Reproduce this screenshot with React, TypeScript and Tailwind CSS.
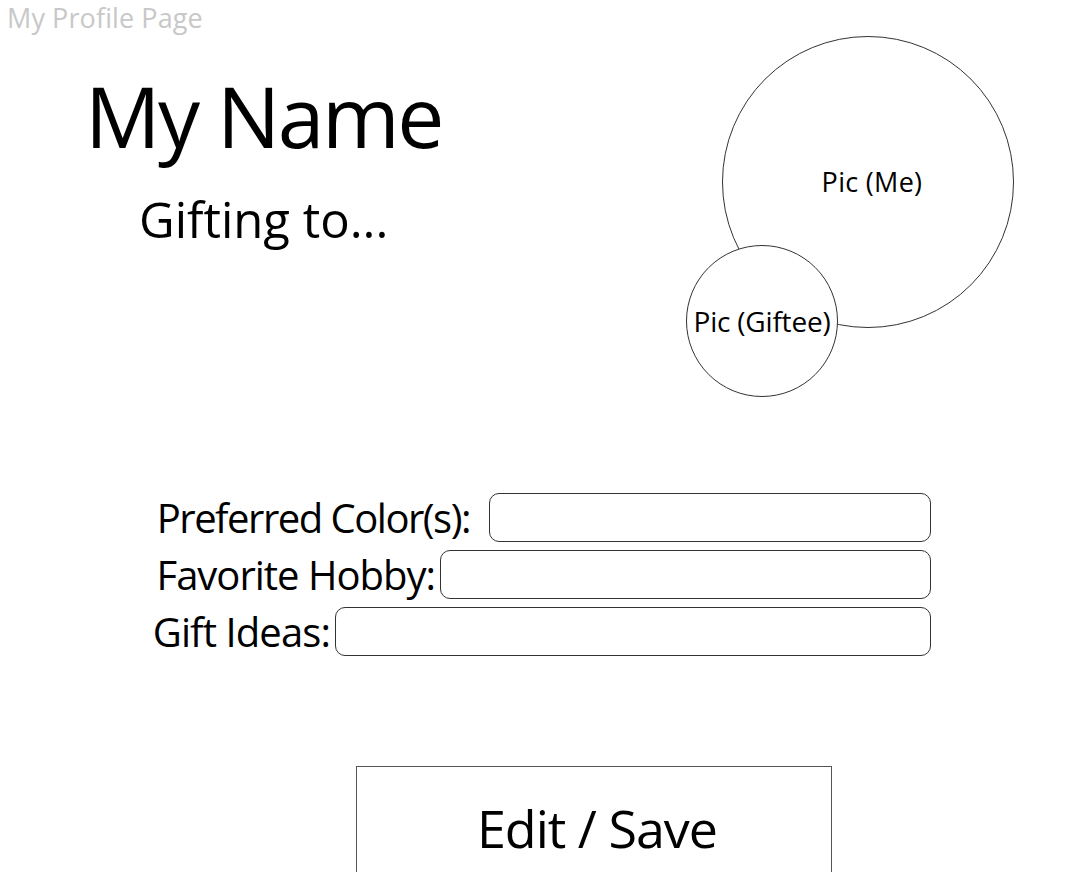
const Field = ({
  label,
  width,
  gap,
  tracking,
}: {
  label: string;
  width: string;
  gap: string;
  tracking: string;
}) => (
  <div className={`flex items-center justify-end ${gap}`}>
    <span className={`shrink-0 text-[40px] leading-none text-black ${tracking}`}>{label}</span>
    <div className={`h-[49px] ${width} rounded-[10px] border border-[#333] bg-white`} />
  </div>
);

export default function App() {
  return (
    <div
      className="relative w-[1091px] h-[872px] overflow-hidden bg-white text-black"
      style={{ fontFamily: '"Open Sans", "Noto Sans", sans-serif' }}
    >
      <div className="h-[36px] pl-[7px] text-[27px] leading-[36px] tracking-[0.1px] text-[#c8c8c8]">
        My Profile Page
      </div>

      {/* Top: name + pictures */}
      <div className="-mt-[6px] flex h-[386px]">
        <div className="flex flex-col pl-[85px] pt-[44px]">
          <h1 className="text-[84px] leading-none tracking-[-2.5px] font-normal">My Name</h1>
          <div className="pl-[54px] pt-[37px] text-[49px] leading-none tracking-[0px]">
            Gifting to...
          </div>
        </div>

        <div className="relative ml-auto mr-[77px] mt-[6px] w-[328px] h-[360px]">
          <div className="absolute left-[36px] top-0 flex h-[292px] w-[292px] items-center justify-center rounded-full border border-[#333] bg-white">
            <span className="text-[27px] tracking-[0.3px] pl-[8px]">Pic (Me)</span>
          </div>
          <div className="absolute left-0 top-[209px] flex h-[152px] w-[152px] items-center justify-center rounded-full border border-[#333] bg-white">
            <span className="text-[28px] tracking-[-0.2px] whitespace-nowrap">Pic (Giftee)</span>
          </div>
        </div>
      </div>

      {/* Preferences */}
      <div className="mt-[77px] flex w-[931px] flex-col gap-[8px]">
        <Field label="Preferred Color(s):" width="w-[442px]" gap="gap-[19px]" tracking="tracking-[-1.5px]" />
        <Field label="Favorite Hobby:" width="w-[491px]" gap="gap-[5px]" tracking="tracking-[-1px]" />
        <Field label="Gift Ideas:" width="w-[596px]" gap="gap-[5px]" tracking="tracking-[-0.9px]" />
      </div>

      <div className="mt-[110px] ml-[356px] flex h-[124px] w-[476px] items-center justify-center border border-[#555] bg-white">
        <span className="text-[52px] leading-none tracking-[-1px] pl-[6px]">Edit / Save</span>
      </div>
    </div>
  );
}
